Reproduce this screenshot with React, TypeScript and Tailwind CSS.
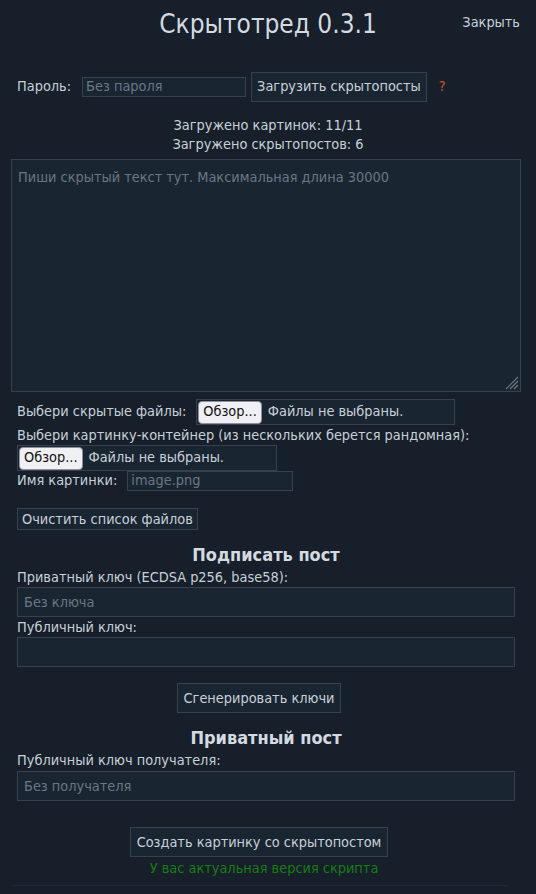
const font = "[font-family:'DejaVu_Sans_Condensed','DejaVu_Sans',sans-serif] [font-stretch:condensed]"
const field = "bg-[#1a2532] border border-[#37414d] outline-none placeholder:text-[#6b7683] text-[14.4px] text-[#c8d0d8]"
const btn = "bg-[#1a2532] border border-[#37414d] text-[14.4px] text-[#c8d0d8]"

const FileField = ({ width }: { width: string }) => (
    <div className={`flex items-center h-[26px] border border-[#37414d] bg-[#1a2532] ${width}`}>
        <span className="ml-[1px] h-[23px] px-[4px] flex items-center rounded-[4px] bg-[#f0f0f4] border border-[#8f8f9d] text-[#111]">Обзор...</span>
        <span className="ml-[6px]">Файлы не выбраны.</span>
    </div>
)

const App = () => {
    return (
        <div className={`w-[536px] h-[894px] bg-[#161f2a] text-[#c8d0d8] text-[14.4px] ${font} overflow-hidden`}>
            <div className="relative h-[46px] flex items-center justify-center">
                <div className="text-[26px] text-[#d4dae0] leading-none mt-[2px]">Скрытотред 0.3.1</div>
                <div className="absolute right-[16px] top-[12px]">Закрыть</div>
            </div>

            <div className="flex items-center mt-[26px] pl-[17px] h-[30px]">
                <span>Пароль:</span>
                <input placeholder="Без пароля" className={`ml-[11px] w-[164px] h-[20px] px-[3px] ${field}`} />
                <button className={`ml-[5px] h-[30px] px-[5px] ${btn}`}>Загрузить скрытопосты</button>
                <span className="ml-[12px] text-[#c8581e]">?</span>
            </div>

            <div className="flex flex-col items-center mt-[14px] leading-[19px]">
                <div>Загружено картинок: 11/11</div>
                <div>Загружено скрытопостов: 6</div>
            </div>

            <div className="relative ml-[11px] mt-[5px] w-[510px] h-[233px]">
                <textarea placeholder="Пиши скрытый текст тут. Максимальная длина 30000" className={`block w-full h-full px-[6px] py-[7px] resize-none ${field}`} />
                <svg className="absolute right-[2px] bottom-[2px]" width="14" height="14" viewBox="0 0 14 14">
                    <path d="M13 1 L1 13 M13 5 L5 13 M13 9 L9 13" stroke="#6b7683" strokeWidth="1.2" />
                </svg>
            </div>

            <div className="pl-[17px] mt-[7px] flex flex-col">
                <div className="flex items-center">
                    <span className="mr-[10px]">Выбери скрытые файлы:</span>
                    <FileField width="w-[259px]" />
                </div>
                <div className="leading-[20px]">Выбери картинку-контейнер (из нескольких берется рандомная):</div>
                <FileField width="w-[260px]" />
                <div className="flex items-center h-[20px]">
                    <span>Имя картинки:</span>
                    <input placeholder="image.png" className={`ml-[10px] w-[166px] h-[20px] px-[3px] ${field}`} />
                </div>
                <div className="mt-[17px]">
                    <button className={`h-[22px] px-[4px] leading-none ${btn}`}>Очистить список файлов</button>
                </div>

                <div className="text-center text-[18px] font-bold text-[#d4dae0] mt-[13px] leading-[24px] pr-[21px]">Подписать пост</div>
                <div className="leading-[20px]">Приватный ключ (ECDSA p256, base58):</div>
                <input placeholder="Без ключа" className={`w-[498px] h-[30px] px-[6px] ${field}`} />
                <div className="leading-[20px]">Публичный ключ:</div>
                <input className={`w-[498px] h-[30px] px-[6px] ${field}`} />
                <div className="flex justify-center pr-[35px] mt-[16px]">
                    <button className={`h-[30px] px-[6px] ${btn}`}>Сгенерировать ключи</button>
                </div>

                <div className="text-center text-[18px] font-bold text-[#d4dae0] mt-[13px] leading-[24px] pr-[21px]">Приватный пост</div>
                <div className="leading-[21px]">Публичный ключ получателя:</div>
                <input placeholder="Без получателя" className={`w-[498px] h-[30px] px-[6px] ${field}`} />
                <div className="flex justify-center pr-[35px] mt-[26px]">
                    <button className={`h-[30px] px-[6px] ${btn}`}>Создать картинку со скрытопостом</button>
                </div>
                <div className="text-center text-[#167d16] pr-[25px] leading-[22px]">У вас актуальная версия скрипта</div>
            </div>
            <div className="ml-[11px] w-[497px] mt-[6px] border-t border-[#1f2935]" />
        </div>
    )
}

export default App
